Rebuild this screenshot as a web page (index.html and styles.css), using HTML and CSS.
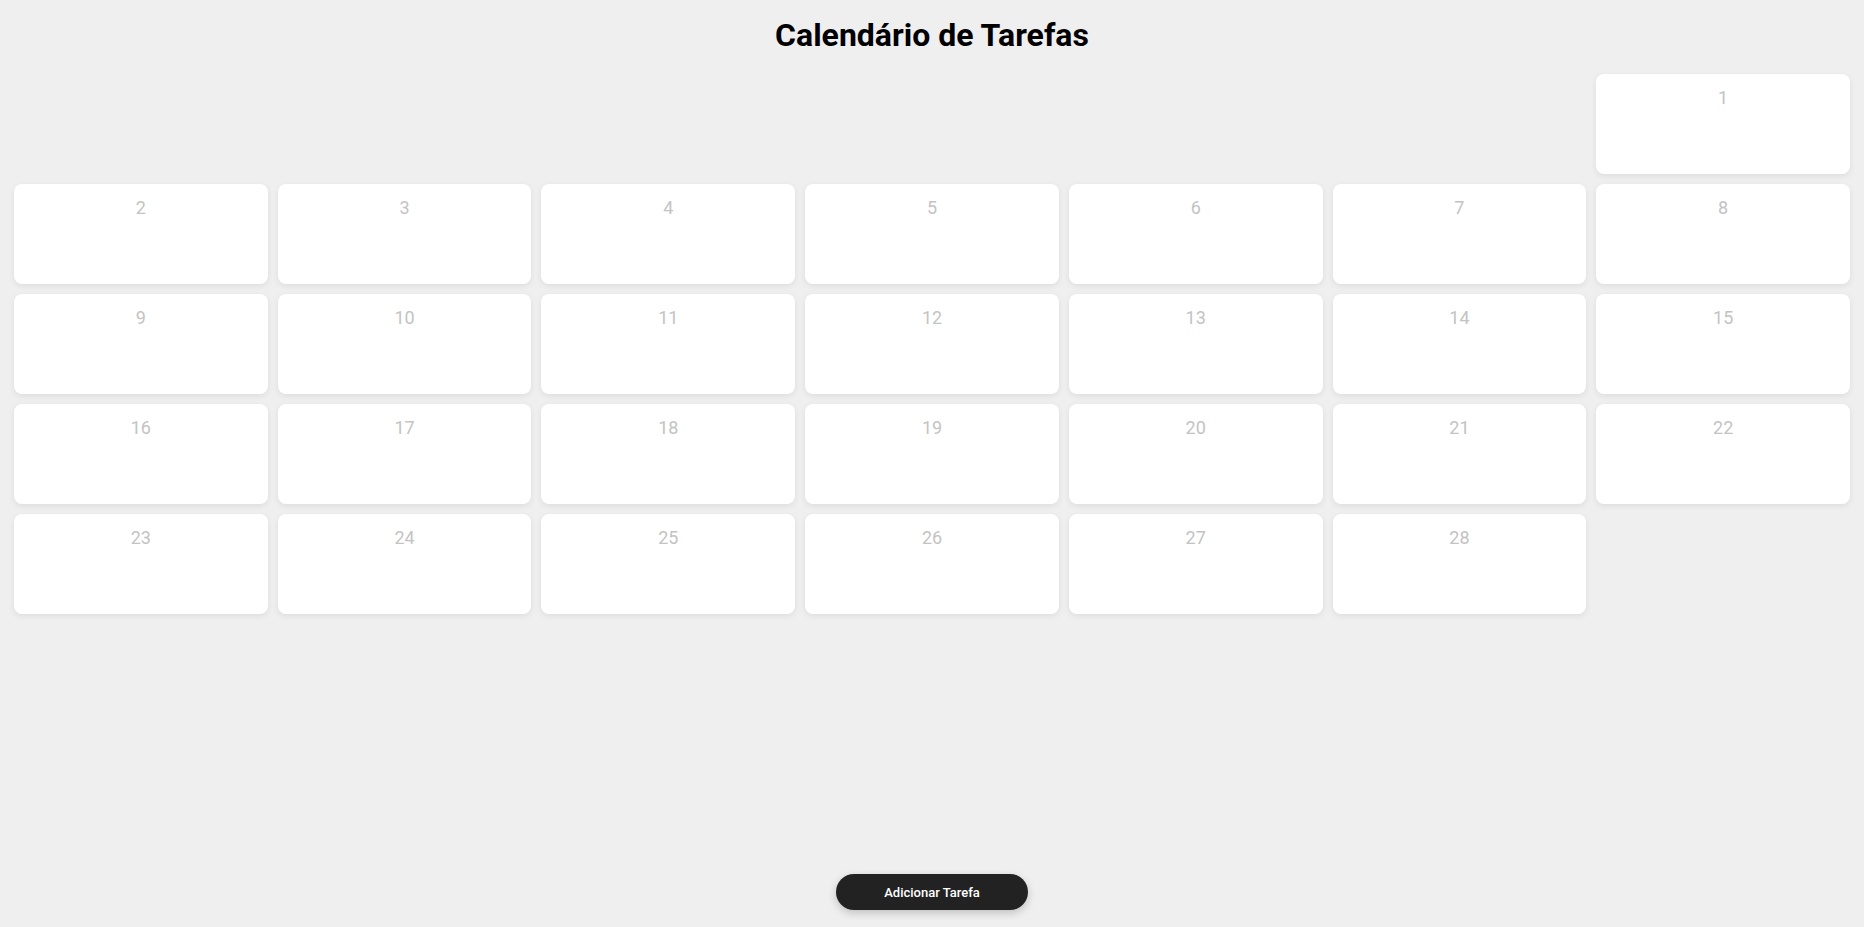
FILE: index.html
```html
<!DOCTYPE html>
<html lang="pt">
<head>
<meta charset="utf-8">
<title>Calendário de Tarefas</title>
<link rel="stylesheet" href="styles.css">
</head>
<body>
<main class="page">
  <h1 class="title">Calendário de Tarefas</h1>
  <div class="calendar">
    <div class="day day-start"><span class="num">1</span></div>
    <div class="day"><span class="num">2</span></div>
    <div class="day"><span class="num">3</span></div>
    <div class="day"><span class="num">4</span></div>
    <div class="day"><span class="num">5</span></div>
    <div class="day"><span class="num">6</span></div>
    <div class="day"><span class="num">7</span></div>
    <div class="day"><span class="num">8</span></div>
    <div class="day"><span class="num">9</span></div>
    <div class="day"><span class="num">10</span></div>
    <div class="day"><span class="num">11</span></div>
    <div class="day"><span class="num">12</span></div>
    <div class="day"><span class="num">13</span></div>
    <div class="day"><span class="num">14</span></div>
    <div class="day"><span class="num">15</span></div>
    <div class="day"><span class="num">16</span></div>
    <div class="day"><span class="num">17</span></div>
    <div class="day"><span class="num">18</span></div>
    <div class="day"><span class="num">19</span></div>
    <div class="day"><span class="num">20</span></div>
    <div class="day"><span class="num">21</span></div>
    <div class="day"><span class="num">22</span></div>
    <div class="day"><span class="num">23</span></div>
    <div class="day"><span class="num">24</span></div>
    <div class="day"><span class="num">25</span></div>
    <div class="day"><span class="num">26</span></div>
    <div class="day"><span class="num">27</span></div>
    <div class="day"><span class="num">28</span></div>
  </div>
  <footer class="actions">
    <button class="add-btn" type="button">Adicionar Tarefa</button>
  </footer>
</main>
</body>
</html>
```

FILE: styles.css
```css
* {
  box-sizing: border-box;
}

html, body {
  margin: 0;
  padding: 0;
}

body {
  background: #efefef;
  font-family: Roboto, "Liberation Sans", Arial, sans-serif;
  color: #000;
}

.page {
  display: flex;
  flex-direction: column;
  min-height: 100vh;
  padding: 16px 14px 17px;
}

.title {
  margin: 0 0 20px;
  font-size: 32px;
  line-height: 38px;
  font-weight: 700;
  text-align: center;
}

.calendar {
  display: grid;
  grid-template-columns: repeat(7, 1fr);
  grid-auto-rows: 100px;
  gap: 10px;
}

.day {
  background: #fff;
  border-radius: 8px;
  box-shadow: 0 2px 6px rgba(0, 0, 0, 0.08);
  padding-top: 13px;
  text-align: center;
}

.day-start {
  grid-column-start: 7;
}

.num {
  font-size: 18px;
  line-height: 21px;
  color: #c3c3c3;
}

.actions {
  margin-top: auto;
  display: flex;
  justify-content: center;
}

.add-btn {
  height: 36px;
  padding: 0 48px;
  border: none;
  border-radius: 18px;
  background: #222;
  color: #fff;
  font-family: Roboto, "Liberation Sans", Arial, sans-serif;
  font-size: 13px;
  font-weight: 500;
  box-shadow: 0 3px 8px rgba(0, 0, 0, 0.2);
  cursor: pointer;
}
```
